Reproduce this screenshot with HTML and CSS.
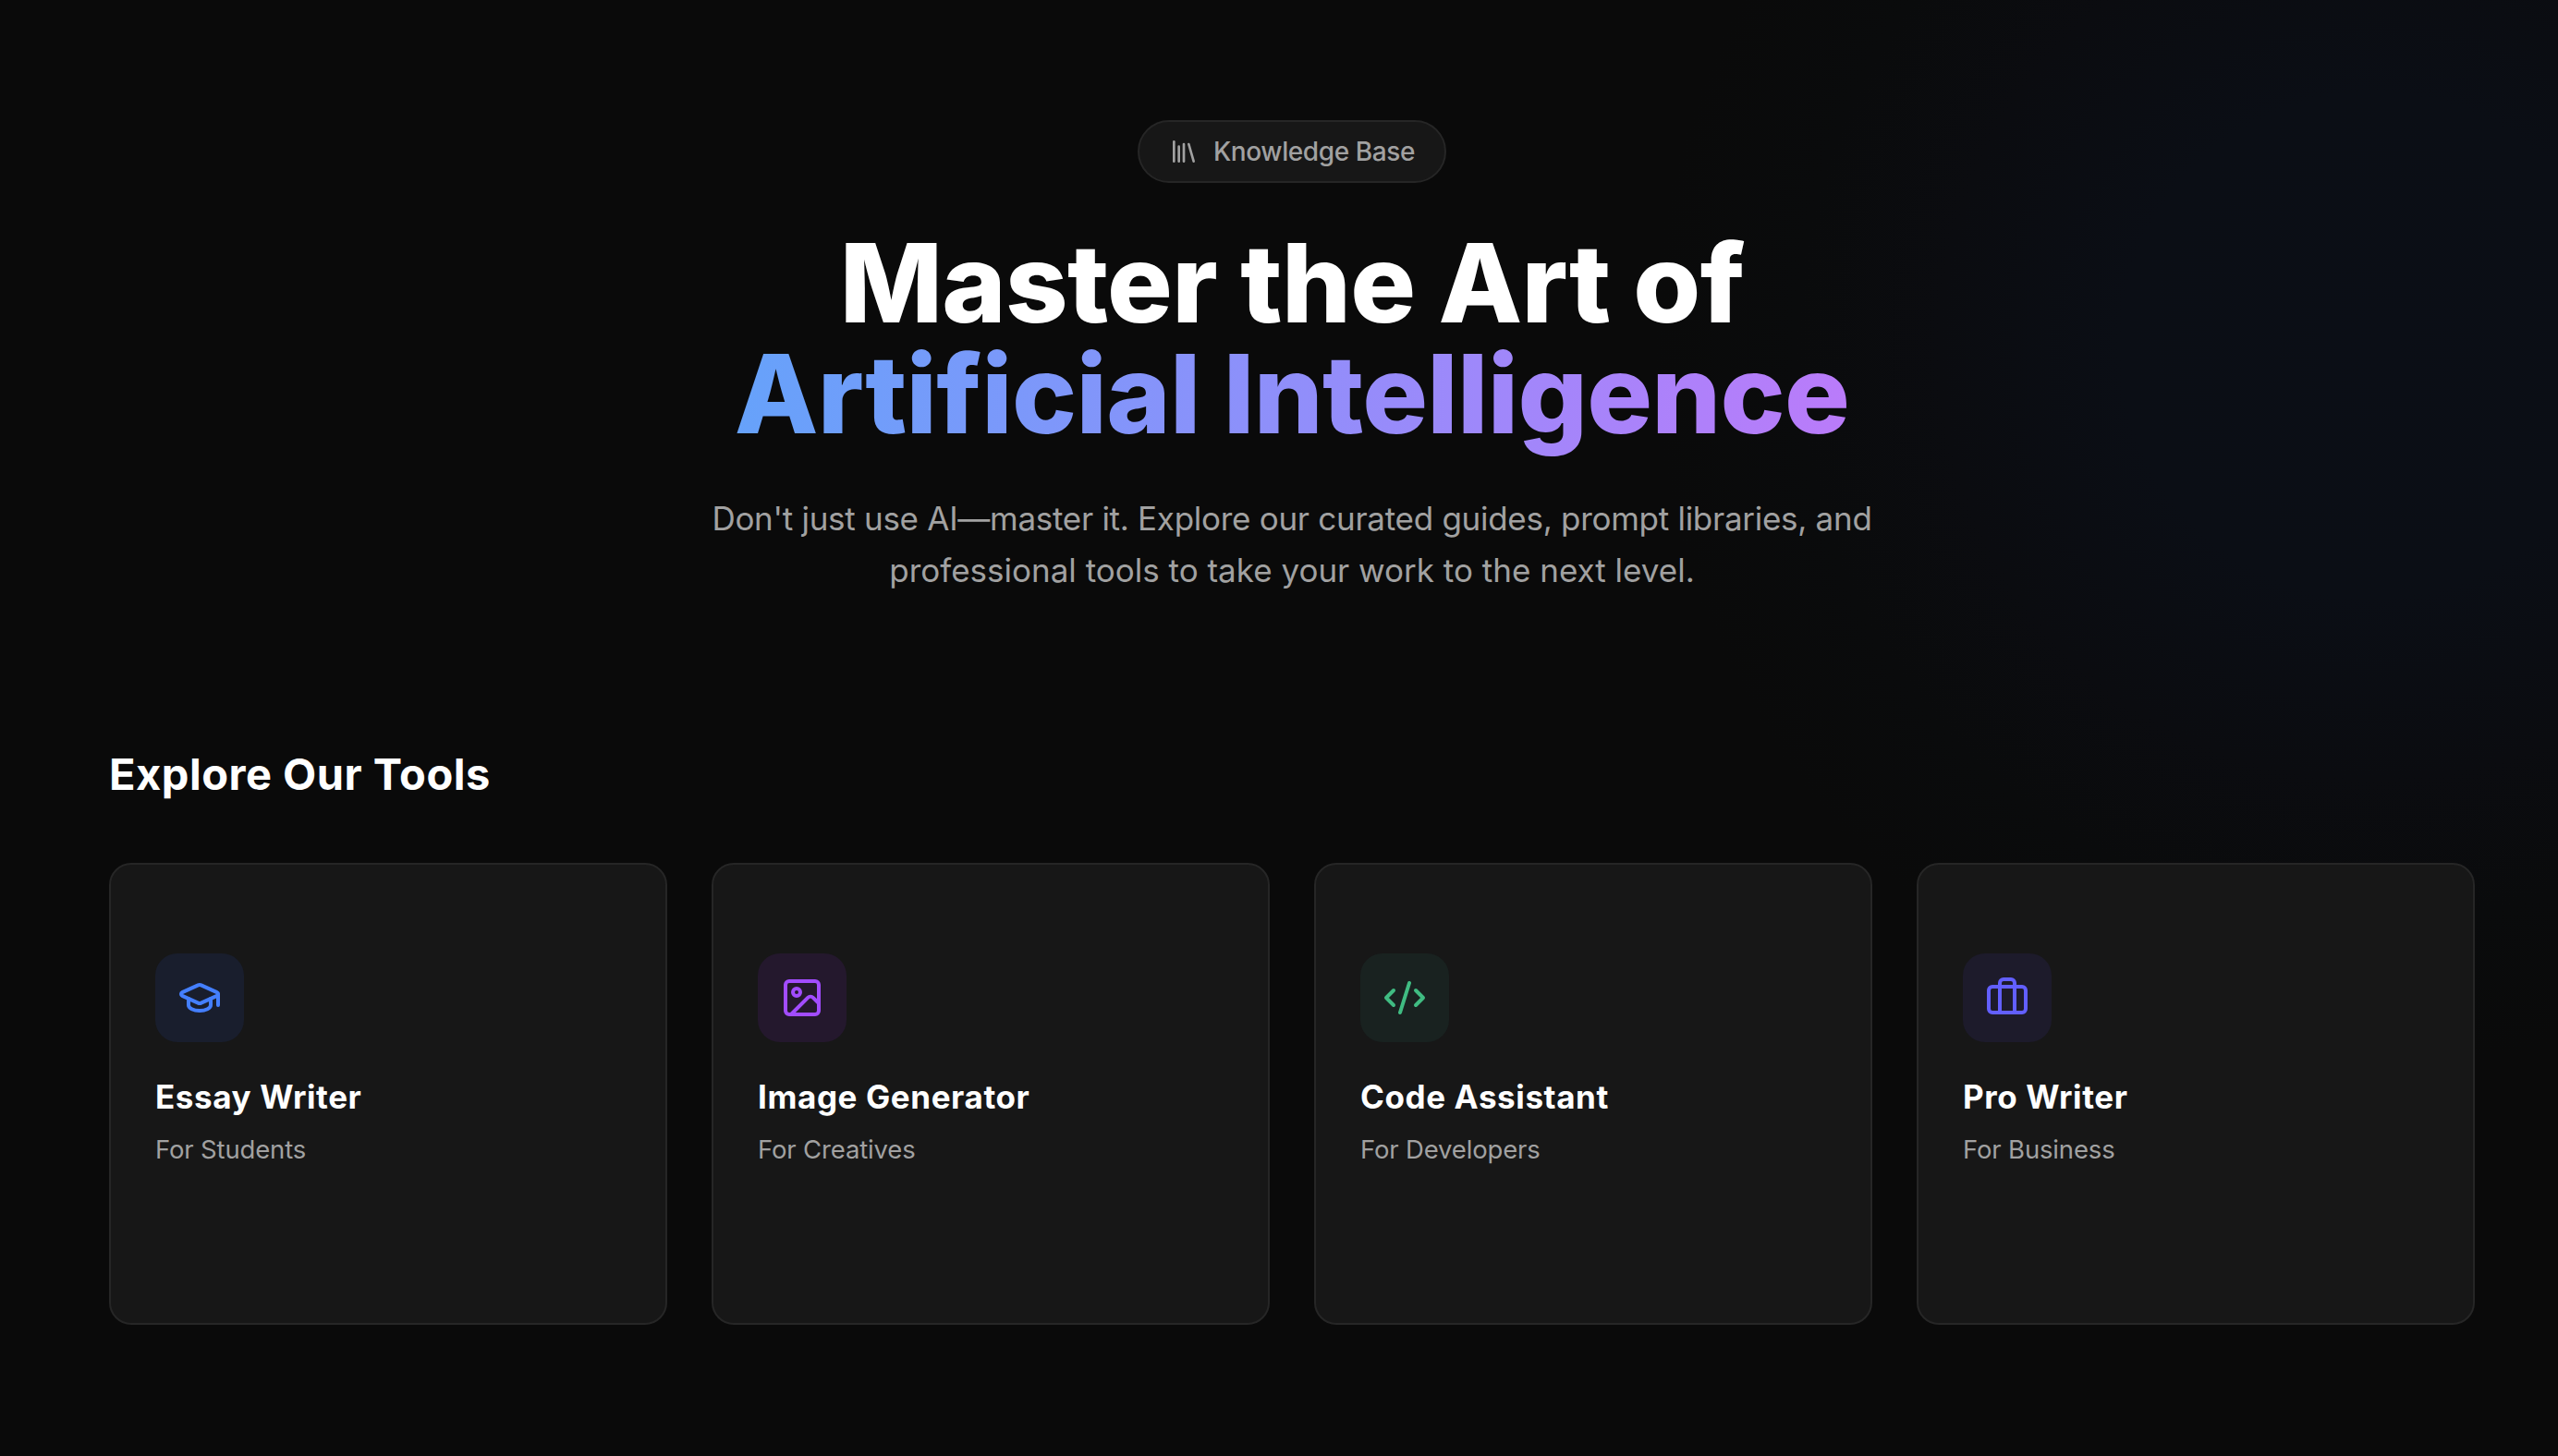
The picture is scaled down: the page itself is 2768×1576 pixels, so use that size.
FILE: index.html
```
<!DOCTYPE html>
<html lang="en">
<head>
    <meta charset="UTF-8">
    <title>Knowledge Base</title>
    <link rel="stylesheet" href="styles.css">
</head>
<body>
    <main class="page">
        <section class="hero">
            <div class="badge">
                <svg class="icon" viewBox="0 0 24 24"><path d="m16 6 4 14"/><path d="M12 6v14"/><path d="M8 8v12"/><path d="M4 4v16"/></svg>
                <span>Knowledge Base</span>
            </div>
            <h1>Master the Art of<br><span class="gradient">Artificial Intelligence</span></h1>
            <p class="intro">
                <span class="line-long">Don't just use AI—master it. Explore our curated guides, prompt libraries, and</span>
                <span>professional tools to take your work to the next level.</span>
            </p>
        </section>

        <section class="tools">
            <h2>Explore Our Tools</h2>
            <div class="grid">
                <div class="card">
                    <div class="card-icon blue">
                        <svg class="icon" viewBox="0 0 24 24"><path d="M21.42 10.922a1 1 0 0 0-.019-1.838L12.83 5.18a2 2 0 0 0-1.66 0L2.6 9.08a1 1 0 0 0 0 1.832l8.57 3.908a2 2 0 0 0 1.66 0z"/><path d="M22 10v6"/><path d="M6 12.5V16a6 3 0 0 0 12 0v-3.5"/></svg>
                    </div>
                    <h3>Essay Writer</h3>
                    <p>For Students</p>
                </div>
                <div class="card">
                    <div class="card-icon purple">
                        <svg class="icon" viewBox="0 0 24 24"><rect width="18" height="18" x="3" y="3" rx="2" ry="2"/><circle cx="9" cy="9" r="2"/><path d="m21 15-3.086-3.086a2 2 0 0 0-2.828 0L6 21"/></svg>
                    </div>
                    <h3>Image Generator</h3>
                    <p>For Creatives</p>
                </div>
                <div class="card">
                    <div class="card-icon green">
                        <svg class="icon" viewBox="0 0 24 24"><path d="m18 16 4-4-4-4"/><path d="m6 8-4 4 4 4"/><path d="m14.5 4-5 16"/></svg>
                    </div>
                    <h3>Code Assistant</h3>
                    <p>For Developers</p>
                </div>
                <div class="card">
                    <div class="card-icon indigo">
                        <svg class="icon" viewBox="0 0 24 24"><path d="M16 20V4a2 2 0 0 0-2-2h-4a2 2 0 0 0-2 2v16"/><rect width="20" height="14" x="2" y="6" rx="2"/></svg>
                    </div>
                    <h3>Pro Writer</h3>
                    <p>For Business</p>
                </div>
            </div>
        </section>
    </main>
</body>
</html>
```
FILE: styles.css
```
* {
    box-sizing: border-box;
}
body {
    margin: 0;
    min-height: 1576px;
    color: #fff;
    font-family: Inter, "Liberation Sans", sans-serif;
    background: #0a0a0a;
}
h1, h2, h3, p {
    margin: 0;
}
.page {
    min-height: 1576px;
    padding: 130px 90px 0 118px;
    background: radial-gradient(circle 780px at 2568px 374px, #0b0e16 0%, #0b0e15 35%, #0b0c10 60%, #0a0b0c 80%, #0a0a0a 100%);
}
.icon {
    fill: none;
    stroke: currentColor;
    stroke-width: 2;
    stroke-linecap: round;
    stroke-linejoin: round;
}

/* Hero */
.hero {
    display: flex;
    flex-direction: column;
    align-items: center;
    text-align: center;
}
.badge {
    display: flex;
    align-items: center;
    gap: 16px;
    width: 334px;
    height: 68px;
    padding: 0 32px;
    border: 2px solid #262626;
    border-radius: 34px;
    background: #171717;
    color: #a1a1a1;
    font-size: 28px;
    font-weight: 500;
    letter-spacing: -0.4px;
    white-space: nowrap;
}
.badge .icon {
    width: 32px;
    height: 32px;
    flex: none;
}
h1 {
    margin-top: 48px;
    font-size: 118px;
    font-weight: 800;
    line-height: 120px;
    letter-spacing: -0.71px;
}
.gradient {
    color: transparent;
    background: linear-gradient(to right, #66a2fa, #ba7bfa);
    -webkit-background-clip: text;
    background-clip: text;
}
.intro {
    margin-top: 47px;
    color: #a1a1a1;
    font-size: 35px;
    line-height: 56px;
}
.intro span {
    display: block;
}
.intro .line-long {
    letter-spacing: -0.28px;
}

/* Tools */
.tools {
    margin-top: 161px;
}
h2 {
    font-size: 47px;
    font-weight: 700;
    line-height: 64px;
    letter-spacing: 0.5px;
}
.grid {
    display: grid;
    grid-template-columns: repeat(4, 1fr);
    gap: 48px;
    margin-top: 64px;
}
.card {
    height: 500px;
    padding: 96px 48px;
    border: 2px solid #262626;
    border-radius: 24px;
    background: #171717;
}
.card h3 {
    margin-top: 31px;
    font-size: 35px;
    font-weight: 700;
    line-height: 56px;
    letter-spacing: 0.6px;
}
.card p {
    margin-top: 9px;
    color: #a1a1a1;
    font-size: 27.5px;
    line-height: 40px;
    letter-spacing: -0.16px;
}
.card-icon {
    display: flex;
    align-items: center;
    justify-content: center;
    width: 96px;
    height: 96px;
    border-radius: 24px;
}
.card-icon .icon {
    width: 48px;
    height: 48px;
}
.blue {
    color: #447fff;
    background: #191e2d;
}
.purple {
    color: #a24cff;
    background: #24182d;
}
.green {
    color: #40bc82;
    background: #192220;
}
.indigo {
    color: #625fff;
    background: #1d1b2b;
}
```
